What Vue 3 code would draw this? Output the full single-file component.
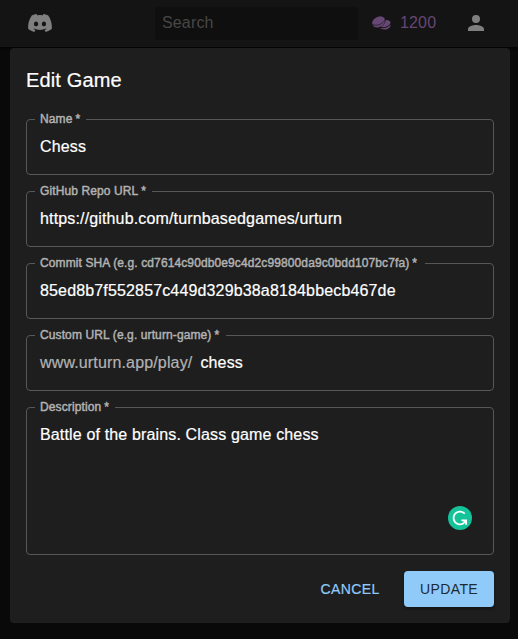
<script setup>
const fields = [
  { id: 'name', label: 'Name', value: 'Chess', notch: 51 },
  { id: 'repo', label: 'GitHub Repo URL', value: 'https://github.com/turnbasedgames/urturn', notch: 117 },
  { id: 'sha', label: 'Commit SHA (e.g. cd7614c90db0e9c4d2c99800da9c0bdd107bc7fa)', value: '85ed8b7f552857c449d329b38a8184bbecb467de', notch: 390 },
  { id: 'url', label: 'Custom URL (e.g. urturn-game)', prefix: 'www.urturn.app/play/', value: 'chess', notch: 191 },
  { id: 'description', label: 'Description', value: 'Battle of the brains. Class game chess', notch: 80, multiline: true },
]
</script>

<template>
  <div class="page">
    <header class="bar">
      <svg class="discord" viewBox="0 0 127.14 96.36" aria-hidden="true">
        <path d="M107.7 8.07A105.15 105.15 0 0 0 81.47 0a72.06 72.06 0 0 0-3.36 6.83 97.68 97.68 0 0 0-29.11 0A72.37 72.37 0 0 0 45.64 0a105.89 105.89 0 0 0-26.25 8.09C2.79 32.65-1.71 56.6.54 80.21a105.73 105.73 0 0 0 32.17 16.15 77.7 77.7 0 0 0 6.89-11.11 68.42 68.42 0 0 1-10.85-5.18c.91-.66 1.8-1.34 2.66-2a75.57 75.57 0 0 0 64.32 0c.87.71 1.76 1.39 2.66 2a68.68 68.68 0 0 1-10.87 5.19 77 77 0 0 0 6.89 11.1 105.25 105.25 0 0 0 32.19-16.14c2.64-27.38-4.51-51.11-18.9-72.15ZM42.45 65.69C36.18 65.69 31 60 31 53s5-12.74 11.43-12.74S54 46 53.89 53s-5.05 12.69-11.44 12.69Zm42.24 0C78.41 65.69 73.25 60 73.25 53s5-12.74 11.44-12.74S96.23 46 96.12 53s-5.04 12.69-11.43 12.69Z" />
      </svg>
      <div class="search">Search</div>
      <div class="coins">
        <svg viewBox="0 0 19 16" aria-hidden="true">
          <g class="coin">
            <ellipse cx="13" cy="8.6" rx="5.6" ry="3.5" transform="rotate(-14 13 8.6)" />
            <path d="M7.6 12.6c3.7 1 8.4-.2 11-3.2.3 2.5-1.8 4.5-4.7 5-2.6.5-5.2-.1-6.3-1.8Z" />
          </g>
          <g class="coin">
            <path class="front" d="M0 7.6C.3 11.9 3 13.5 6.6 12.5c4.3-1.2 7.1-4.3 6.8-8.1Z" />
            <ellipse cx="6.5" cy="6" rx="6.6" ry="4.2" transform="rotate(-24 6.5 6)" />
          </g>
          <path class="groove" d="M.6 9.3c3.4 2.6 11-.5 12.6-4.9M8 12.7c3.7.5 7.8-.4 10.5-3.4" />
        </svg>
        <span>1200</span>
      </div>
      <svg class="person" viewBox="0 0 16 16" aria-hidden="true">
        <path d="M8 8a4 4 0 1 0 0-8 4 4 0 0 0 0 8Zm0 2c-2.67 0-8 1.34-8 4v2h16v-2c0-2.66-5.33-4-8-4Z" />
      </svg>
    </header>

    <main class="dialog">
      <h1>Edit Game</h1>
      <form @submit.prevent>
        <fieldset v-for="f in fields" :key="f.id" :class="{ multiline: f.multiline }">
          <legend :style="{ width: f.notch + 'px' }">{{ f.label }}<span class="star">*</span></legend>
          <div class="value">
            <span v-if="f.prefix" class="prefix">{{ f.prefix }}</span>{{ f.value }}
            <svg v-if="f.multiline" class="grammar" viewBox="0 0 24 24" aria-hidden="true">
              <circle cx="12" cy="12" r="12" />
              <path d="M16.7 7.7A6.4 6.4 0 1 0 15.6 17.2L17.6 14.9M13.4 14.4H18.1V18.8" />
            </svg>
          </div>
        </fieldset>
        <div class="actions">
          <button type="button" class="cancel">CANCEL</button>
          <button type="button" class="update">UPDATE</button>
        </div>
      </form>
    </main>
  </div>
</template>

<style>
body { margin: 0; background: #090909; }
</style>

<style scoped>
.page {
  height: 639px;
  overflow: hidden;
  background: #090909;
  font-family: "Liberation Sans", Arial, sans-serif;
  color: #fff;
}
.bar {
  display: flex;
  align-items: center;
  box-sizing: border-box;
  height: 47px;
  padding: 0 34px 1px 28px;
  background: #141414;
  box-shadow: 0 1px 3px #000;
}
.discord { width: 24px; height: 18px; fill: #7f7f7f; }
.search {
  box-sizing: border-box;
  width: 203px;
  height: 33px;
  margin-left: 103px;
  padding-left: 7px;
  border-radius: 4px;
  background: #0f0f0f;
  color: #474747;
  font-size: 16px;
  line-height: 31px;
  letter-spacing: 0.15px;
}
.coins {
  display: flex;
  align-items: center;
  gap: 9px;
  margin-left: 14px;
  color: #674774;
  font-size: 16px;
  letter-spacing: 0.15px;
}
.coins svg { width: 19px; height: 16px; }
.coin { fill: #674774; }
.front { stroke: #141414; stroke-width: .5; }
.groove { fill: none; stroke: #141414; stroke-width: .65; }
.person { width: 16px; height: 16px; margin-left: auto; fill: #7f7f7f; }
.dialog {
  box-sizing: border-box;
  position: relative;
  width: 500px;
  height: 575px;
  margin: 1px 10px 0;
  padding: 16px;
  border-radius: 4px;
  background: #1e1e1e;
}
h1 {
  margin: 0 0 16px;
  font-size: 20px;
  font-weight: 400;
  line-height: 32px;
  letter-spacing: 0.15px;
  -webkit-text-stroke: 0.2px;
}
form { display: flex; flex-direction: column; }
fieldset {
  box-sizing: border-box;
  width: 468px;
  height: 63px;
  min-width: 0;
  margin: 0 0 9px;
  padding: 0 13px 0 8px;
  border: 1px solid #575757;
  border-radius: 4px;
}
fieldset.multiline { height: 155px; margin-bottom: 16px; }
legend {
  box-sizing: border-box;
  height: 14px;
  padding: 0 0 0 5px;
  color: #b2b2b2;
  font-size: 12px;
  letter-spacing: 0.11px;
  line-height: 14px;
  white-space: nowrap;
  -webkit-text-stroke: 0.45px;
}
.star { margin-left: 3px; }
.value {
  position: relative;
  padding: 12px 0 0 5px;
  font-size: 16px;
  letter-spacing: 0.15px;
  line-height: 18px;
  white-space: nowrap;
  -webkit-text-stroke: 0.2px;
}
.prefix { margin-right: 8px; color: #b2b2b2; }
.grammar { position: absolute; right: 8px; top: 92px; width: 24px; height: 24px; }
.grammar circle { fill: #15c39a; }
.grammar path { fill: none; stroke: #fff; stroke-width: 1.8; }
.actions { display: flex; justify-content: flex-end; gap: 8px; }
button {
  height: 36px;
  padding: 0;
  border: 0;
  border-radius: 4px;
  font-family: inherit;
  font-size: 14px;
  line-height: 24px;
  letter-spacing: 0.4px;
}
.cancel { width: 92px; background: transparent; color: #90caf9; -webkit-text-stroke: 0.2px; }
.update {
  width: 90px;
  background: #90caf9;
  color: #1d2a33;
  box-shadow: 0 2px 3px rgba(0, 0, 0, .35);
}
</style>
